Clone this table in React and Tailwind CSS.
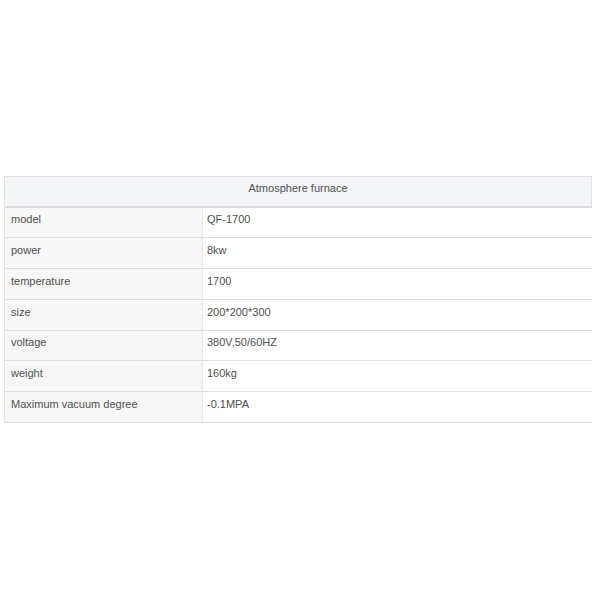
import React from 'react';

const rows = [
  ['model', 'QF-1700', 'h-[30px]'],
  ['power', '8kw', 'h-[31px]'],
  ['temperature', '1700', 'h-[31px]'],
  ['size', '200*200*300', 'h-[31px]'],
  ['voltage', '380V,50/60HZ', 'h-[30px]'],
  ['weight', '160kg', 'h-[31px]'],
  ['Maximum vacuum degree', '-0.1MPA', 'h-[31px]'],
];

export default function App() {
  return (
    <div className="w-[600px] h-[600px] bg-white pt-[176px] font-['Liberation_Sans',Arial,sans-serif] text-[11px] text-[#505050]">
      <div className="ml-[4px] w-[588px] border-t border-l border-[#e3e3e3]">
        <div className="h-[31px] flex items-center justify-center pb-[6px] bg-[#f3f5f8] border-b-2 border-[#dcdcdc] border-r border-r-[#e3e3e3]">
          Atmosphere furnace
        </div>
        {rows.map(([k, v, h], i) => (
          <div key={i} className={`flex ${h} border-b border-[#dedede]`}>
            <div className="w-[198px] flex items-center pl-[6px] pb-[6px] bg-[#f7f7f7] border-r border-[#e6e6e6]">{k}</div>
            <div className="flex-1 flex items-center pl-[4px] pb-[6px] bg-white">{v}</div>
          </div>
        ))}
      </div>
    </div>
  );
}
